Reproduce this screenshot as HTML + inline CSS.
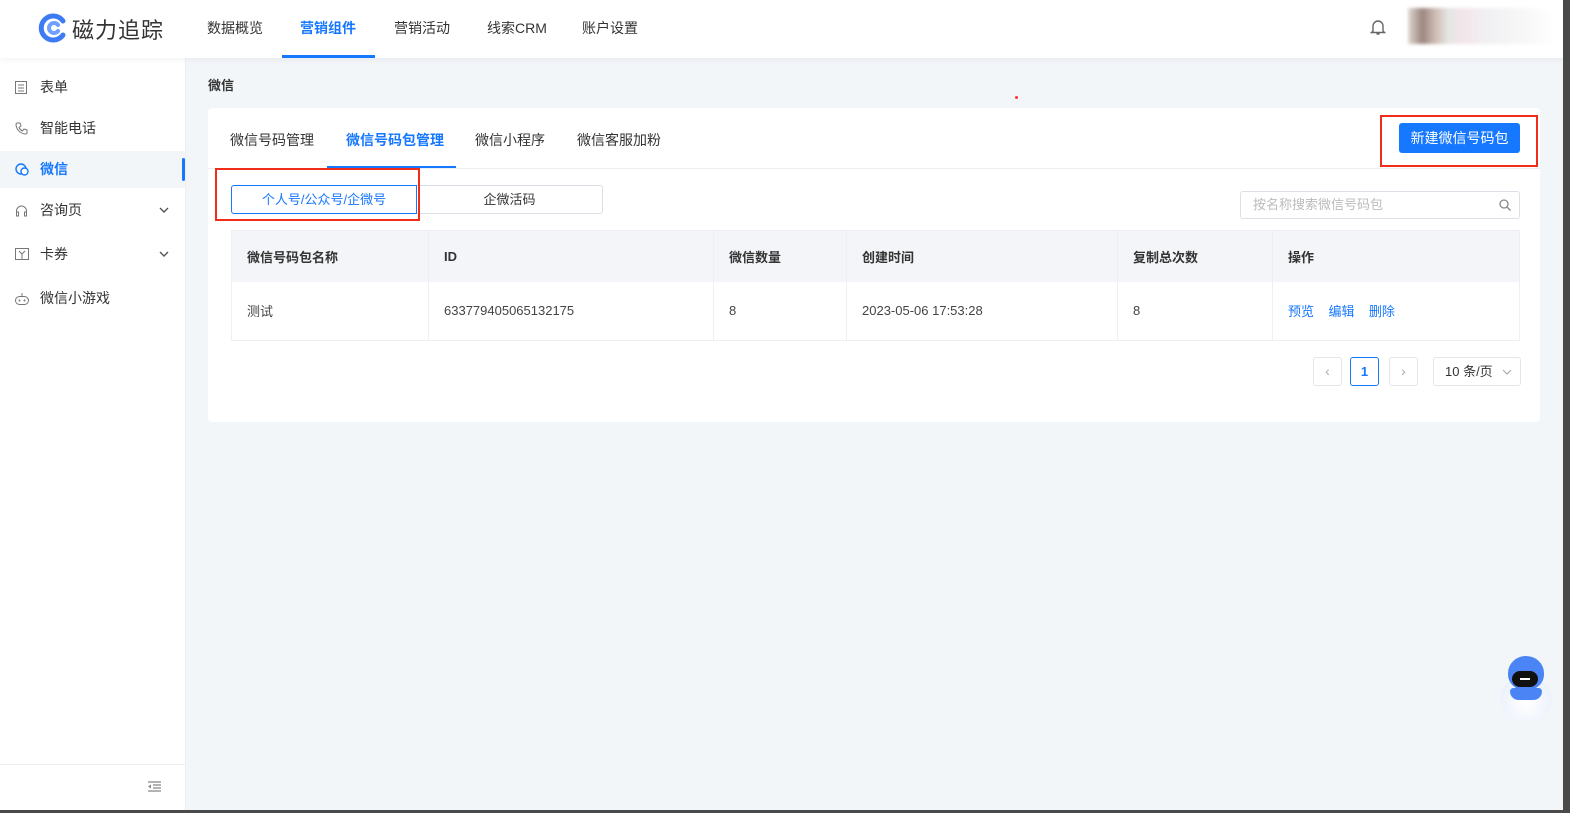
<!DOCTYPE html>
<html><head><meta charset="utf-8"><style>
*{box-sizing:border-box;margin:0;padding:0}
body{width:1570px;height:813px;overflow:hidden;background:#f3f6f9;font-family:"Liberation Sans","Noto Sans CJK SC",sans-serif;font-size:14px;color:#333;position:relative}
.a{position:absolute}
.hdr{left:0;top:0;width:1563px;height:58px;background:#fff;box-shadow:0 2px 6px rgba(0,0,0,.05);z-index:2}
.nav{top:0;height:58px;line-height:56px;font-size:14px;color:#333}
.side{left:0;top:58px;width:186px;height:752px;background:#fff;border-right:1px solid #eceff3}
.mi{left:0;width:185px;height:37px;line-height:37px;padding-left:40px;font-size:14px;color:#333}
.mi svg{position:absolute;left:15px;top:12px}
.mi svg.ch{left:159px;top:15px}
.card{left:208px;top:108px;width:1332px;height:314px;background:#fff;border-radius:4px}
.tab{top:130px;font-size:14px;color:#333}
th,td{text-align:left;font-weight:normal;padding-left:15px;border-right:1px solid #edf0f3}
table{border-collapse:collapse}
th{height:51px;background:#f3f5f8;font-weight:bold;color:#333;font-size:13px}
td{height:59px;font-size:13px;color:#444}
.pg{top:357px;width:29px;height:29px;border:1px solid #e2e5ea;border-radius:3px;text-align:center;line-height:27px;color:#aaa;background:#fff}
</style></head><body>
<div class="a hdr">
 <svg class="a" style="left:38px;top:13px" width="30" height="30" viewBox="0 0 30 30"><path d="M25 8A12 12 0 1 0 25 22" fill="none" stroke="#3d7bf5" stroke-width="5" stroke-linecap="round"/><path d="M20 12A5 5 0 1 0 20 18" fill="none" stroke="#6fa0ff" stroke-width="4" stroke-linecap="round"/></svg>
 <div class="a" style="left:72px;top:13px;font-size:22px;color:#333;letter-spacing:1px">磁力追踪</div>
 <div class="a nav" style="left:207px">数据概览</div>
 <div class="a nav" style="left:300px;color:#1677ff;font-weight:bold">营销组件</div>
 <div class="a" style="left:282px;top:55px;width:93px;height:3px;background:#1677ff"></div>
 <div class="a nav" style="left:394px">营销活动</div>
 <div class="a nav" style="left:487px">线索CRM</div>
 <div class="a nav" style="left:582px">账户设置</div>
 <svg class="a" style="left:1370px;top:18px" width="16" height="18" viewBox="0 0 16 18"><path d="M3 13V8a5 5 0 0 1 10 0v5l1.5 1.5h-13z M6.5 16h3" fill="none" stroke="#666" stroke-width="1.4"/></svg>
 <div class="a" style="left:1408px;top:8px;width:145px;height:36px;background:linear-gradient(90deg,#d8ccc4 0,#7a5e55 10%,#c0a89c 19%,#ddd 28%,#f0dde3 38%,#ececef 55%,#f5f5f5 80%,#fff 100%);opacity:.75;filter:blur(1.5px)"></div>
</div>
<div class="a" style="left:1563px;top:0;width:7px;height:813px;background:#4a4a4a"></div>
<div class="a" style="left:0;top:810px;width:1570px;height:3px;background:#4a4a4a"></div>
<div class="a side">
 <div class="a mi" style="top:11px"><svg width="12" height="13"><rect x=".5" y=".5" width="11" height="12" fill="none" stroke="#777"/><path d="M3 4h6M3 7h6M3 10h6" stroke="#777"/></svg>表单</div>
 <div class="a mi" style="top:52px"><svg width="13" height="13"><path d="M2 1l3 0 1 3-2 1.5a7 7 0 0 0 3.5 3.5L9 7l3 1v3l-1 1A10 10 0 0 1 1 2z" fill="none" stroke="#777"/></svg>智能电话</div>
 <div class="a mi" style="top:93px;background:#f3f6f9;color:#1677ff;font-weight:bold"><svg width="14" height="13"><circle cx="6" cy="6" r="5" fill="none" stroke="#1677ff" stroke-width="1.4"/><circle cx="9.5" cy="8.5" r="3.5" fill="#fff" stroke="#1677ff" stroke-width="1.4"/></svg>微信</div>
 <div class="a" style="left:182px;top:100px;width:3px;height:23px;background:#1677ff;border-radius:2px"></div>
 <div class="a mi" style="top:134px"><svg width="13" height="13"><path d="M1.5 11V7a5 5 0 0 1 10 0v4M1.5 8h2v4h-2zM9.5 8h2v4h-2z" fill="none" stroke="#777"/></svg>咨询页<svg class="ch" width="10" height="6"><path d="M1 1l4 4 4-4" fill="none" stroke="#555" stroke-width="1.4"/></svg></div>
 <div class="a mi" style="top:178px"><svg width="14" height="12"><rect x=".5" y=".5" width="13" height="11" fill="none" stroke="#777"/><path d="M4 3l3 3 3-3M7 6v5" fill="none" stroke="#777"/></svg>卡券<svg class="ch" width="10" height="6"><path d="M1 1l4 4 4-4" fill="none" stroke="#555" stroke-width="1.4"/></svg></div>
 <div class="a mi" style="top:222px"><svg width="14" height="13"><rect x=".5" y="4.5" width="13" height="8" rx="4" fill="none" stroke="#777"/><path d="M7 4.5V1" stroke="#777"/><circle cx="4.5" cy="8.5" r="1" fill="#777"/><circle cx="9.5" cy="8.5" r="1" fill="#777"/></svg>微信小游戏</div>
 <div class="a" style="left:0;top:706px;width:185px;height:1px;background:#eee"></div>
 <svg class="a" style="left:148px;top:723px" width="13" height="11"><path d="M0 1h13M5 4h8M5 7h8M0 10h13" stroke="#888" stroke-width="1.3"/><path d="M0 5.5l3-2v4z" fill="#888"/></svg>
</div>
<div class="a" style="left:208px;top:75px;font-size:13px;font-weight:bold;color:#333">微信</div>
<div class="a" style="left:1015px;top:96px;width:3px;height:3px;background:#f33;border-radius:50%"></div>
<div class="a card"></div>
<div class="a" style="left:208px;top:168px;width:1332px;height:1px;background:#eceff3"></div>
<div class="a tab" style="left:230px">微信号码管理</div>
<div class="a tab" style="left:346px;color:#1677ff;font-weight:bold">微信号码包管理</div>
<div class="a" style="left:327px;top:166px;width:129px;height:2px;background:#1677ff"></div>
<div class="a tab" style="left:475px">微信小程序</div>
<div class="a tab" style="left:577px">微信客服加粉</div>
<div class="a" style="left:1399px;top:123px;width:121px;height:30px;background:#1677ff;border-radius:3px;color:#fff;text-align:center;line-height:30px;font-size:14px">新建微信号码包</div>
<div class="a" style="left:1380px;top:115px;width:158px;height:52px;border:2px solid #f02d1a"></div>
<div class="a" style="left:416px;top:185px;width:187px;height:29px;border:1px solid #dcdfe6;border-radius:0 3px 3px 0;text-align:center;line-height:27px;font-size:13px;color:#333">企微活码</div>
<div class="a" style="left:231px;top:185px;width:186px;height:29px;border:1px solid #1677ff;border-radius:3px 0 0 3px;text-align:center;line-height:27px;font-size:13px;color:#1677ff;background:#fff">个人号/公众号/企微号</div>
<div class="a" style="left:215px;top:168px;width:205px;height:53px;border:2px solid #f02d1a"></div>
<div class="a" style="left:1240px;top:191px;width:280px;height:28px;border:1px solid #dcdfe6;border-radius:3px;padding-left:12px;line-height:26px;font-size:13px;color:#bbb">按名称搜索微信号码包
 <svg class="a" style="left:258px;top:7px" width="12" height="12"><circle cx="5" cy="5" r="4" fill="none" stroke="#888" stroke-width="1.3"/><path d="M8 8l3.5 3.5" stroke="#888" stroke-width="1.3"/></svg></div>
<table class="a" style="left:231px;top:230px;width:1289px;border:1px solid #edf0f3">
<tr><th style="width:197px">微信号码包名称</th><th style="width:285px">ID</th><th style="width:133px">微信数量</th><th style="width:271px">创建时间</th><th style="width:155px">复制总次数</th><th style="border-right:0">操作</th></tr>
<tr><td>测试</td><td>633779405065132175</td><td>8</td><td>2023-05-06 17:53:28</td><td>8</td><td style="color:#1677ff;border-right:0">预览&nbsp;&nbsp;&nbsp;&nbsp;编辑&nbsp;&nbsp;&nbsp;&nbsp;删除</td></tr>
</table>
<div class="a pg" style="left:1313px">&#8249;</div>
<div class="a pg" style="left:1350px;border-color:#1677ff;color:#1677ff;font-weight:bold;font-size:13px">1</div>
<div class="a pg" style="left:1389px">&#8250;</div>
<div class="a" style="left:1433px;top:357px;width:88px;height:29px;border:1px solid #e2e5ea;border-radius:3px;line-height:27px;padding-left:11px;font-size:13px;color:#333;background:#fff">10 条/页<svg class="a" style="left:68px;top:11px" width="10" height="6"><path d="M1 1l4 4 4-4" fill="none" stroke="#aaa" stroke-width="1.2"/></svg></div>
<div class="a" style="left:1500px;top:676px;width:52px;height:46px;border-radius:50%;background:radial-gradient(circle at 50% 60%,#fff,#e4ecfb)"></div>
<div class="a" style="left:1508px;top:656px;width:36px;height:34px;border-radius:50% 50% 45% 45%;background:#4b85f5"></div>
<div class="a" style="left:1512px;top:671px;width:26px;height:16px;border-radius:8px;background:#111"></div>
<div class="a" style="left:1520px;top:678px;width:10px;height:2px;background:#fff"></div>
<div class="a" style="left:1510px;top:688px;width:32px;height:12px;border-radius:4px 4px 10px 10px;background:#4b85f5"></div>
</body></html>
